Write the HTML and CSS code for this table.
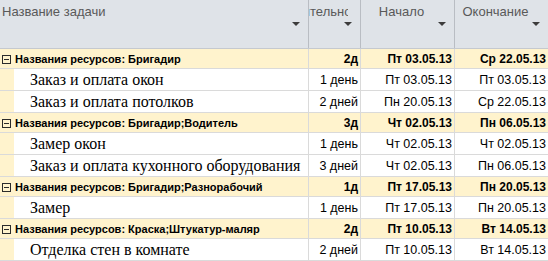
FILE: index.html
```html
<!DOCTYPE html>
<html lang="ru">
<head>
<meta charset="utf-8">
<link rel="stylesheet" href="styles.css">
</head>
<body>
<div class="grid">
  <div class="row head">
    <div class="hc c1"><span class="hwrap"><span class="htxt">Название задачи</span></span><span class="arrow"></span></div>
    <div class="hc c2"><span class="hwrap"><span class="htxt">Длительность</span></span><span class="arrow"></span></div>
    <div class="hc c3"><span class="hwrap"><span class="htxt">Начало</span></span><span class="arrow"></span></div>
    <div class="hc c4"><span class="hwrap"><span class="htxt">Окончание</span></span><span class="arrow"></span></div>
  </div>

  <div class="row grp">
    <div class="c c1"><span class="box"></span>Названия ресурсов: Бригадир</div>
    <div class="c c2 num">2д</div>
    <div class="c c3 num">Пт 03.05.13</div>
    <div class="c c4 num">Ср 22.05.13</div>
  </div>
  <div class="row task">
    <div class="c c1"><span class="ind"></span><span class="name">Заказ и оплата окон</span></div>
    <div class="c c2 num">1 день</div>
    <div class="c c3 num">Пт 03.05.13</div>
    <div class="c c4 num">Пт 03.05.13</div>
  </div>
  <div class="row task">
    <div class="c c1"><span class="ind"></span><span class="name">Заказ и оплата потолков</span></div>
    <div class="c c2 num">2 дней</div>
    <div class="c c3 num">Пн 20.05.13</div>
    <div class="c c4 num">Ср 22.05.13</div>
  </div>

  <div class="row grp">
    <div class="c c1"><span class="box"></span>Названия ресурсов: Бригадир;Водитель</div>
    <div class="c c2 num">3д</div>
    <div class="c c3 num">Чт 02.05.13</div>
    <div class="c c4 num">Пн 06.05.13</div>
  </div>
  <div class="row task">
    <div class="c c1"><span class="ind"></span><span class="name">Замер окон</span></div>
    <div class="c c2 num">1 день</div>
    <div class="c c3 num">Чт 02.05.13</div>
    <div class="c c4 num">Чт 02.05.13</div>
  </div>
  <div class="row task">
    <div class="c c1"><span class="ind"></span><span class="name">Заказ и оплата кухонного оборудования</span></div>
    <div class="c c2 num">3 дней</div>
    <div class="c c3 num">Чт 02.05.13</div>
    <div class="c c4 num">Пн 06.05.13</div>
  </div>

  <div class="row grp">
    <div class="c c1"><span class="box"></span>Названия ресурсов: Бригадир;Разнорабочий</div>
    <div class="c c2 num">1д</div>
    <div class="c c3 num">Пт 17.05.13</div>
    <div class="c c4 num">Пн 20.05.13</div>
  </div>
  <div class="row task">
    <div class="c c1"><span class="ind"></span><span class="name">Замер</span></div>
    <div class="c c2 num">1 день</div>
    <div class="c c3 num">Пт 17.05.13</div>
    <div class="c c4 num">Пн 20.05.13</div>
  </div>

  <div class="row grp">
    <div class="c c1"><span class="box"></span>Названия ресурсов: Краска;Штукатур-маляр</div>
    <div class="c c2 num">2д</div>
    <div class="c c3 num">Пт 10.05.13</div>
    <div class="c c4 num">Вт 14.05.13</div>
  </div>
  <div class="row task">
    <div class="c c1"><span class="ind"></span><span class="name">Отделка стен в комнате</span></div>
    <div class="c c2 num">2 дней</div>
    <div class="c c3 num">Пт 10.05.13</div>
    <div class="c c4 num">Вт 14.05.13</div>
  </div>
</div>
</body>
</html>
```
FILE: styles.css
```css
html, body {
  margin: 0;
  padding: 0;
  background: #ffffff;
}
.grid {
  width: 548px;
  height: 261px;
  overflow: hidden;
  font-family: "Liberation Sans", Arial, sans-serif;
}
.row {
  display: grid;
  grid-template-columns: 309px 52px 94px 93px;
}
.head {
  height: 48px;
  background: #dfe3e8;
  border-bottom: 1px solid #c5c9cf;
}
.hc {
  position: relative;
  display: flex;
  border-right: 1px solid #b9bdc3;
  padding: 4px 12px 0 0;
  box-sizing: border-box;
  min-width: 0;
}
.hc.c4 { border-right: none; }
.hwrap {
  flex: 1;
  min-width: 0;
  display: flex;
  justify-content: center;
  align-items: flex-start;
  overflow: hidden;
}
.hc.c1 .hwrap {
  justify-content: flex-start;
  padding-left: 2px;
}
.htxt {
  font-size: 13px;
  line-height: 15px;
  color: #595959;
  white-space: nowrap;
  flex: none;
}
.arrow {
  position: absolute;
  right: 8px;
  top: 22px;
  width: 0;
  height: 0;
  border-left: 4px solid transparent;
  border-right: 4px solid transparent;
  border-top: 4px solid #3c3c3c;
}
.c {
  border-right: 1px solid #dadada;
  border-bottom: 1px solid #dadada;
  white-space: nowrap;
  overflow: hidden;
  display: flex;
  align-items: center;
  color: #000;
  box-sizing: border-box;
}
.c4 { border-right: none; }
.num {
  justify-content: flex-end;
  padding-right: 2px;
}
.grp {
  height: 20px;
  background: #fff3cd;
}
.grp .c {
  font-size: 12px;
  font-weight: bold;
  padding-top: 1px;
}
.grp .c1 {
  font-size: 11px;
  padding-left: 2px;
}
.box {
  width: 7px;
  height: 7px;
  border: 1px solid #2b2b2b;
  margin-right: 4px;
  position: relative;
  flex: none;
}
.box::after {
  content: "";
  position: absolute;
  left: 1px;
  right: 1px;
  top: 3px;
  height: 1px;
  background: #2b2b2b;
}
.task {
  height: 22px;
  background: #ffffff;
}
.task .c {
  font-size: 12.5px;
  padding-top: 1px;
}
.task .c1 {
  align-items: stretch;
  padding-top: 0;
}
.ind {
  width: 14px;
  background: #fff3cd;
  flex: none;
}
.name {
  font-family: "Liberation Serif", "Times New Roman", serif;
  font-size: 16px;
  padding-left: 16px;
  padding-top: 1px;
  display: flex;
  align-items: center;
}
```
